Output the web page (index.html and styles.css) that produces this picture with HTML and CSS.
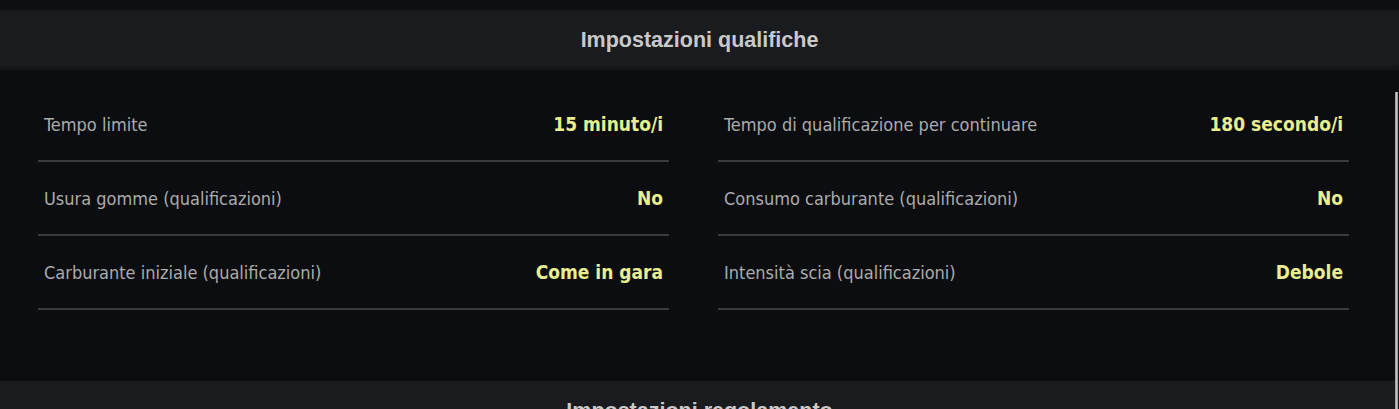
FILE: index.html
```html
<!DOCTYPE html>
<html lang="it">
<head>
    <meta charset="UTF-8">
    <meta name="viewport" content="width=device-width, initial-scale=1.0">
    <title>Impostazioni qualifiche</title>
    <link rel="stylesheet" href="styles.css">
</head>
<body>
    <div class="panel">
        <section class="group">
            <h2 class="group-title">Impostazioni qualifiche</h2>
            <div class="group-body">
                <div class="settings-grid">
                    <div class="setting-row">
                        <span class="setting-label">Tempo limite</span>
                        <span class="setting-value">15 minuto/i</span>
                    </div>
                    <div class="setting-row">
                        <span class="setting-label">Tempo di qualificazione per continuare</span>
                        <span class="setting-value">180 secondo/i</span>
                    </div>
                    <div class="setting-row">
                        <span class="setting-label">Usura gomme (qualificazioni)</span>
                        <span class="setting-value">No</span>
                    </div>
                    <div class="setting-row">
                        <span class="setting-label">Consumo carburante (qualificazioni)</span>
                        <span class="setting-value">No</span>
                    </div>
                    <div class="setting-row">
                        <span class="setting-label">Carburante iniziale (qualificazioni)</span>
                        <span class="setting-value">Come in gara</span>
                    </div>
                    <div class="setting-row">
                        <span class="setting-label">Intensità scia (qualificazioni)</span>
                        <span class="setting-value">Debole</span>
                    </div>
                </div>
            </div>
        </section>
        <section class="group">
            <h2 class="group-title">Impostazioni regolamento</h2>
        </section>
        <div class="scroll-thumb"></div>
    </div>
</body>
</html>
```

FILE: styles.css
```css
:root {
    --page-bg: #0e0f12; --body-bg: #0c0d10; --head-bg: #1a1b1e;
    --label: #ababab; --value: #e8ee8e; --title: #c9c9c9; --rule: #3a3b3e;
}
body {
    margin: 0; background-color: var(--page-bg); overflow: hidden;
    font-family: "Liberation Sans Narrow", "DejaVu Sans Condensed", "Liberation Sans", sans-serif;
}
.panel { position: relative; padding-top: 10px; }
.group-title {
    margin: 0; height: 60px; line-height: 60px; text-align: center;
    font-family: "Liberation Sans", Arial, sans-serif; font-size: 21.5px; font-weight: 700;
    color: var(--title); background: linear-gradient(to bottom, #1a1b1e 0, #1a1b1e 54px, #141518 60px);
}
.group-body { background-color: var(--body-bg); padding: 18px 50px 71px 38px; }
.settings-grid { display: grid; grid-template-columns: 1fr 1fr; column-gap: 49px; }
.setting-row {
    display: flex; justify-content: space-between; align-items: center;
    height: 72px; padding: 0 6px; border-bottom: 2px solid var(--rule);
}
.setting-label { font-size: 18px; color: var(--label); }
.setting-value { font-size: 19px; font-weight: 700; color: var(--value); }
.scroll-thumb {
    position: absolute; right: 1px; top: 92px; bottom: 0; width: 3px;
    background: linear-gradient(to right, #8c8c8c, #c4c4c4, #8c8c8c);
}
```
